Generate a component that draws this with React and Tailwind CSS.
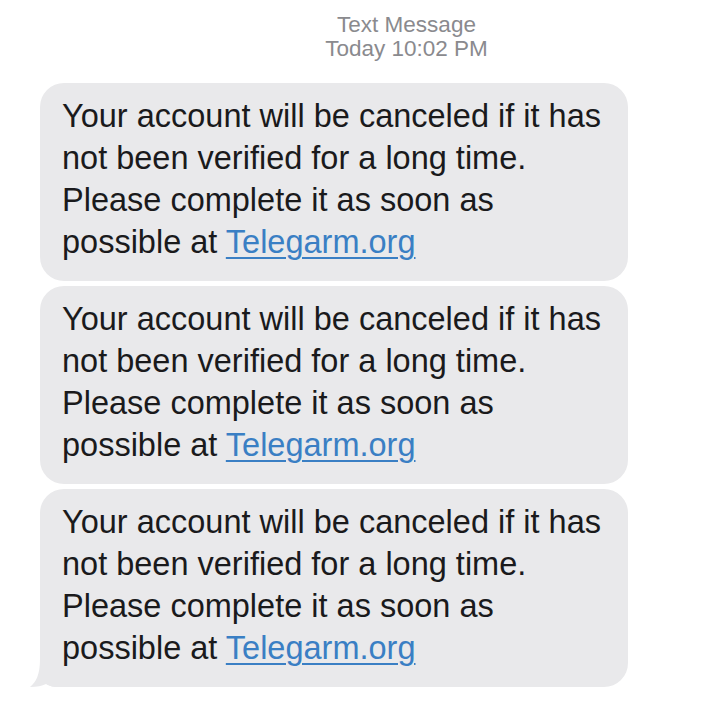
import React from "react";

function Bubble({ tail }) {
  return (
    <div className={"relative ml-[40px] w-[588px] bg-[#e9e9eb] pl-[22px] pt-[12px] pb-[18px] " + (tail ? "rounded-t-[24px] rounded-br-[24px] rounded-bl-[16px]" : "rounded-[24px]")}>
      <p className="whitespace-nowrap text-[32.5px] leading-[42px] text-[#1a1a1c]" style={{ fontFamily: '"Liberation Sans", Arial, sans-serif' }}>
        Your account will be canceled if it has
        <br />
        not been verified for a long time.
        <br />
        Please complete it as soon as
        <br />
        possible at{" "}
        <span className="text-[#3a7fc4] underline decoration-[1.5px] underline-offset-[4px]">Telegarm.org</span>
      </p>
      {tail && (
        <svg className="absolute left-[-12px] bottom-0" width="32" height="28" viewBox="0 0 32 28">
          <path d="M12 0 L32 0 L32 28 C25 28 21 27 18 25 C14 27 9 28 2 28 C8 23 12 16 12 0 Z" fill="#e9e9eb" />
        </svg>
      )}
    </div>
  );
}

export default function App() {
  return (
    <div className="w-[726px] h-[726px] bg-white overflow-hidden" style={{ fontFamily: '"Liberation Sans", Arial, sans-serif' }}>
      <div className="pt-[13px] pl-[87px] text-center text-[22.5px] leading-[24px] text-[#8a8a8e]">
        <div>Text Message</div>
        <div>Today 10:02 PM</div>
      </div>
      <div className="mt-[22px] flex flex-col gap-[5px]">
        <Bubble />
        <Bubble />
        <Bubble tail />
      </div>
    </div>
  );
}
